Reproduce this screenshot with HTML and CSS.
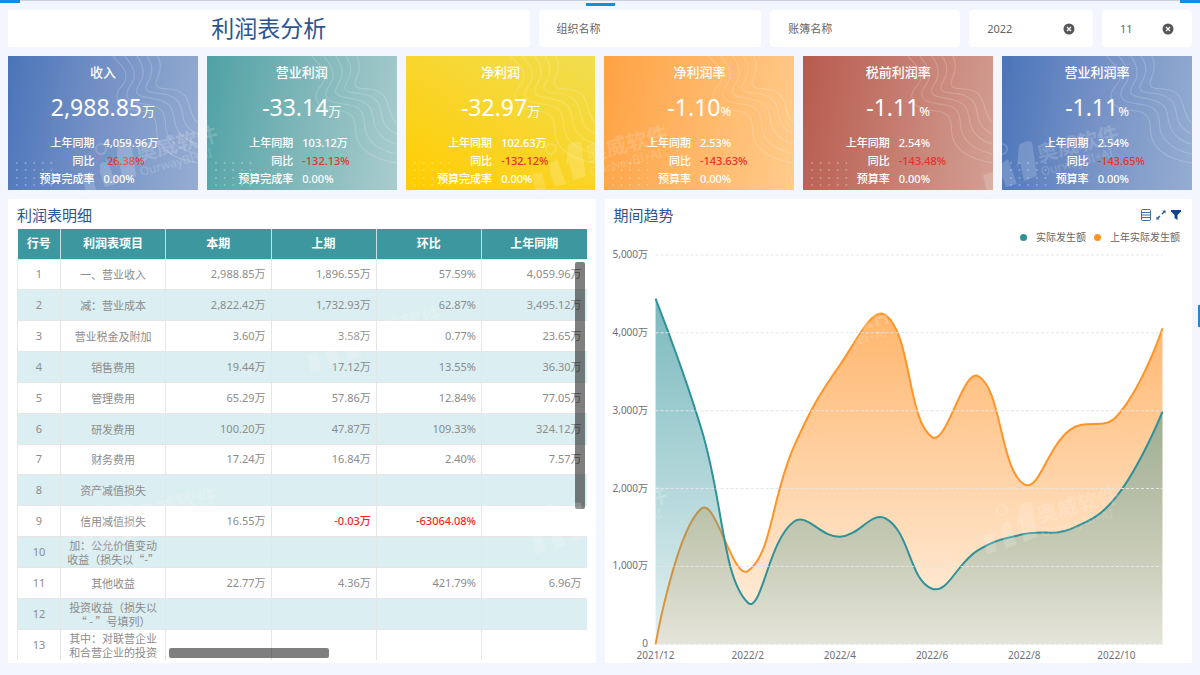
FILE: index.html
```html
<!DOCTYPE html>
<html lang="zh-CN">
<head>
    <meta charset="UTF-8">
    <meta name="viewport" content="width=device-width, initial-scale=1.0">
    <title>利润表分析</title>
    <link rel="stylesheet" href="styles.css">
</head>
<body>
    <!-- Shared shapes -->
    <svg class="defs" width="0" height="0" aria-hidden="true">
        <symbol id="card-art" viewBox="0 0 190 134">
            <g fill="none" stroke="#fff" stroke-opacity=".18" stroke-width="1.2">
                <path d="M105 0C111 8 119 12 118 22C117 30 109 32 109 40C109 52 122 54 134 55C150 57 148 68 149 78C151 94 168 104 190 107"/>
                <path d="M117 0C123 8 128 14 126 23C124 30 118 32 119 39C120 47 132 47 143 49C158 52 157 62 158 72C160 86 174 95 190 98"/>
                <path d="M129 0C135 8 137 15 134 23C132 29 127 32 129 37C131 42 142 41 151 44C166 48 165 57 167 66C169 78 180 86 190 88"/>
                <path d="M139 0C145 8 145 15 142 22C140 28 136 30 139 34C142 38 152 36 160 39C173 43 173 51 175 60C177 70 184 76 190 78"/>
                <path d="M150 0C154 8 153 14 150 21C148 26 147 28 150 31C154 34 162 32 168 34C180 38 180 46 183 55C185 61 187 65 190 67"/>
            </g>
            <g fill="none" stroke="#fff" stroke-opacity=".3" stroke-width="2" stroke-linecap="round" stroke-dasharray="0 8.6">
                <path d="M9 107H45"/>
                <path d="M9 114H45"/>
                <path d="M9 122H45"/>
                <path d="M9 129H45"/>
            </g>
        </symbol>
        <symbol id="icon-clear" viewBox="0 0 12 12">
            <circle cx="6" cy="6" r="5.5" fill="#54565c"/>
            <path d="M4 4L8 8M8 4L4 8" stroke="#fff" stroke-width="1.3"/>
        </symbol>
    </svg>

    <div class="top-line"><i></i><i></i><i></i></div>

    <main class="dashboard">
        <header class="header">
            <h1 class="title">利润表分析</h1>
            <div class="filter"><input type="text" placeholder="组织名称" aria-label="组织名称"></div>
            <div class="filter"><input type="text" placeholder="账簿名称" aria-label="账簿名称"></div>
            <div class="filter">
                <input type="text" value="2022" aria-label="年">
                <button type="button" aria-label="清除年"><svg><use href="#icon-clear"/></svg></button>
            </div>
            <div class="filter">
                <input type="text" value="11" aria-label="月">
                <button type="button" aria-label="清除月"><svg><use href="#icon-clear"/></svg></button>
            </div>
        </header>

        <section class="cards">
            <article class="card blue">
                <svg class="card-art"><use href="#card-art"/></svg>
                <h2>收入</h2>
                <p class="amount">2,988.85<small>万</small></p>
                <dl>
                    <dt>上年同期</dt><dd>4,059.96万</dd>
                    <dt>同比</dt><dd class="down">-26.38%</dd>
                    <dt>预算完成率</dt><dd>0.00%</dd>
                </dl>
            </article>
            <article class="card teal">
                <svg class="card-art"><use href="#card-art"/></svg>
                <h2>营业利润</h2>
                <p class="amount">-33.14<small>万</small></p>
                <dl>
                    <dt>上年同期</dt><dd>103.12万</dd>
                    <dt>同比</dt><dd class="down">-132.13%</dd>
                    <dt>预算完成率</dt><dd>0.00%</dd>
                </dl>
            </article>
            <article class="card yellow">
                <svg class="card-art"><use href="#card-art"/></svg>
                <h2>净利润</h2>
                <p class="amount">-32.97<small>万</small></p>
                <dl>
                    <dt>上年同期</dt><dd>102.63万</dd>
                    <dt>同比</dt><dd class="down">-132.12%</dd>
                    <dt>预算完成率</dt><dd>0.00%</dd>
                </dl>
            </article>
            <article class="card orange">
                <svg class="card-art"><use href="#card-art"/></svg>
                <h2>净利润率</h2>
                <p class="amount">-1.10<small>%</small></p>
                <dl>
                    <dt>上年同期</dt><dd>2.53%</dd>
                    <dt>同比</dt><dd class="down">-143.63%</dd>
                    <dt>预算率</dt><dd>0.00%</dd>
                </dl>
            </article>
            <article class="card red">
                <svg class="card-art"><use href="#card-art"/></svg>
                <h2>税前利润率</h2>
                <p class="amount">-1.11<small>%</small></p>
                <dl>
                    <dt>上年同期</dt><dd>2.54%</dd>
                    <dt>同比</dt><dd class="down">-143.48%</dd>
                    <dt>预算率</dt><dd>0.00%</dd>
                </dl>
            </article>
            <article class="card blue">
                <svg class="card-art"><use href="#card-art"/></svg>
                <h2>营业利润率</h2>
                <p class="amount">-1.11<small>%</small></p>
                <dl>
                    <dt>上年同期</dt><dd>2.54%</dd>
                    <dt>同比</dt><dd class="down">-143.65%</dd>
                    <dt>预算率</dt><dd>0.00%</dd>
                </dl>
            </article>
        </section>

        <div class="panels">
            <section class="panel">
                <div class="panel-head"><h2>利润表明细</h2></div>
                <div class="table-box">
                    <table>
                        <colgroup><col class="col-no"><col class="col-main"><col class="col-main"><col class="col-main"><col class="col-main"><col></colgroup>
                        <thead>
                            <tr><th>行号</th><th>利润表项目</th><th>本期</th><th>上期</th><th>环比</th><th>上年同期</th></tr>
                        </thead>
                        <tbody>
                            <tr><td>1</td><td>一、营业收入</td><td>2,988.85万</td><td>1,896.55万</td><td>57.59%</td><td>4,059.96万</td></tr>
                            <tr><td>2</td><td>减：营业成本</td><td>2,822.42万</td><td>1,732.93万</td><td>62.87%</td><td>3,495.12万</td></tr>
                            <tr><td>3</td><td>营业税金及附加</td><td>3.60万</td><td>3.58万</td><td>0.77%</td><td>23.65万</td></tr>
                            <tr><td>4</td><td>销售费用</td><td>19.44万</td><td>17.12万</td><td>13.55%</td><td>36.30万</td></tr>
                            <tr><td>5</td><td>管理费用</td><td>65.29万</td><td>57.86万</td><td>12.84%</td><td>77.05万</td></tr>
                            <tr><td>6</td><td>研发费用</td><td>100.20万</td><td>47.87万</td><td>109.33%</td><td>324.12万</td></tr>
                            <tr><td>7</td><td>财务费用</td><td>17.24万</td><td>16.84万</td><td>2.40%</td><td>7.57万</td></tr>
                            <tr><td>8</td><td>资产减值损失</td><td></td><td></td><td></td><td></td></tr>
                            <tr><td>9</td><td>信用减值损失</td><td>16.55万</td><td class="negative">-0.03万</td><td class="negative">-63064.08%</td><td></td></tr>
                            <tr><td>10</td><td>加：公允价值变动<br>收益（损失以“-”</td><td></td><td></td><td></td><td></td></tr>
                            <tr><td>11</td><td>其他收益</td><td>22.77万</td><td>4.36万</td><td>421.79%</td><td>6.96万</td></tr>
                            <tr><td>12</td><td>投资收益（损失以<br>“ - ”号填列）</td><td></td><td></td><td></td><td></td></tr>
                            <tr><td>13</td><td>其中：对联营企业<br>和合营企业的投资</td><td></td><td></td><td></td><td></td></tr>
                        </tbody>
                    </table>
                    <div class="scroll-y"></div>
                    <div class="scroll-x"></div>
                </div>
            </section>

            <section class="panel">
                <div class="panel-head">
                    <h2>期间趋势</h2>
                    <div class="tools">
                        <button type="button" aria-label="数据">
                            <svg viewBox="0 0 12 12" fill="none" stroke="#3a6ea8"><rect x="1.5" y=".5" width="9" height="11" rx="1"/><path d="M2 3.500H10M2 6H10M2 8.500H10"/></svg>
                        </button>
                        <button type="button" aria-label="放大">
                            <svg viewBox="0 0 12 12" stroke="#1f5597" fill="#1f5597"><path d="M2.500 9.500L5 7M7 5L9.500 2.500" stroke-width="1.4"/><path d="M1.500 7.500V10.500H4.500ZM7.500 1.500H10.500V4.500Z" stroke="none"/></svg>
                        </button>
                        <button type="button" aria-label="筛选">
                            <svg viewBox="0 0 12 12" fill="#0f4590"><path d="M1 1H11V2.500L7.500 6V11L4.500 9V6L1 2.500Z"/></svg>
                        </button>
                    </div>
                </div>
                <ul class="legend">
                    <li class="current">实际发生额</li>
                    <li class="previous">上年实际发生额</li>
                </ul>
                <svg class="chart" id="chart" viewBox="0 0 587 418" role="img" aria-label="期间趋势">
                    <defs>
                        <linearGradient id="fill-current" x1="0" y1="0" x2="0" y2="1">
                            <stop offset="0" stop-color="#2f9299" stop-opacity=".64"/>
                            <stop offset="1" stop-color="#2f9299" stop-opacity=".13"/>
                        </linearGradient>
                        <linearGradient id="fill-previous" x1="0" y1="0" x2="0" y2="1">
                            <stop offset="0" stop-color="#ff9429" stop-opacity=".68"/>
                            <stop offset="1" stop-color="#ff9429" stop-opacity=".13"/>
                        </linearGradient>
                    </defs>
                </svg>
            </section>
        </div>
    </main>

    <div class="side-handle"></div>

    <svg class="watermarks" id="watermarks" aria-hidden="true"></svg>

    <script src="script.js"></script>
</body>
</html>
```
FILE: styles.css
```css
* {
    margin: 0;
    padding: 0;
    box-sizing: border-box;
}

body {
    min-height: 100vh;
    background: #f3f6fe;
    font-family: "Noto Sans", "Noto Sans CJK SC", sans-serif;
    font-size: 11px;
    color: #666;
}

button {
    border: none;
    background: none;
    cursor: pointer;
}

.defs {
    position: absolute;
}

/* Top edge */
.top-line {
    position: absolute;
    top: 0;
    left: 0;
    right: 0;
    display: flex;
    justify-content: space-between;
    border-top: 1px solid #ccd0de;
}

.top-line i {
    width: 20px;
    height: 3px;
    margin-top: -1px;
    background: #0f8fe0;
}

.top-line i:nth-child(2) {
    width: 29px;
    margin-top: 2px;
}

.side-handle {
    position: absolute;
    top: 305px;
    right: 0;
    width: 2px;
    height: 22px;
    background: #2288dd;
}

.dashboard {
    display: flex;
    flex-direction: column;
    gap: 9px;
    min-height: 100vh;
    padding: 10px 8px 12px;
}

/* Header */
.header {
    display: grid;
    grid-template-columns: 522fr 223fr 190fr 124fr 90fr;
    gap: 9px;
}

.title {
    background: #fff;
    font-size: 23px;
    line-height: 37px;
    font-weight: 400;
    text-align: center;
    color: #2b5590;
}

.filter {
    display: flex;
    align-items: center;
    height: 37px;
    padding: 0 18px;
    background: #fff;
    border-radius: 4px;
}

.filter input {
    flex: 1;
    width: 100%;
    min-width: 0;
    border: none;
    outline: none;
    background: none;
    font: inherit;
    color: #666;
}

.filter input::placeholder {
    color: #666;
    opacity: 1;
}

.filter button,
.filter svg {
    display: block;
    width: 12px;
    height: 12px;
}

/* Cards */
.cards {
    display: grid;
    grid-template-columns: repeat(6, 1fr);
    gap: 9px;
}

.card {
    position: relative;
    padding: 6px 0 2px;
    color: #fff;
    text-align: center;
}

.card-art {
    position: absolute;
    top: 0;
    left: 0;
    width: 100%;
    height: 100%;
}

.card h2 {
    font-size: 13px;
    line-height: 20px;
    font-weight: 500;
}

.amount {
    font-size: 23px;
    line-height: 32px;
    margin: 9px 0 11px;
}

.amount small {
    font-size: 13px;
    line-height: 1;
}

.card dl {
    display: grid;
    grid-template-columns: 11fr 12fr;
    column-gap: 9px;
    line-height: 18px;
    font-weight: 500;
}

.card dt {
    text-align: right;
}

.card dd {
    text-align: left;
}

.card .down {
    color: #e5322d;
}

.blue {
    background: linear-gradient(100deg, #4a74b9, #7390c5 45%, #96add2);
}

.teal {
    background: linear-gradient(100deg, #4fa1a5, #7fb7b9 50%, #aaccce);
}

.yellow {
    background: linear-gradient(30deg, #ffcd00, #f9d52a 50%, #f0de50);
}

.orange {
    background: linear-gradient(100deg, #ffa243, #ffb768 50%, #ffcc8c);
}

.red {
    background: linear-gradient(100deg, #b75b4e, #c57d70 50%, #d3a095);
}

/* Panels */
.panels {
    flex: 1;
    display: grid;
    grid-template-columns: 1fr 1fr;
    gap: 9px;
}

.panel {
    display: flex;
    flex-direction: column;
    background: #fff;
}

.panel-head {
    display: flex;
    justify-content: space-between;
    align-items: center;
    height: 30px;
    padding: 2px 9px 0;
}

.panel-head h2 {
    font-size: 15px;
    line-height: 20px;
    font-weight: 400;
    color: #2b5590;
}

.tools {
    display: flex;
    gap: 3px;
    padding-right: 1px;
}

.tools button,
.tools svg {
    display: block;
    width: 12px;
    height: 12px;
}

/* Table */
.table-box {
    position: relative;
    margin: 0 9px;
}

table {
    width: 100%;
    height: 431px;
    table-layout: fixed;
    border-collapse: collapse;
    line-height: 14px;
    color: #8c8c8c;
}

.col-no {
    width: 43px;
}

.col-main {
    width: 18.5%;
}

th {
    height: 30px;
    background: #3d979e;
    border-right: 1px solid #c5e0e2;
    font-size: 12px;
    color: #fff;
}

th:last-child {
    border-right: none;
}

td {
    height: 30px;
    padding: 0 5px;
    border: 1px solid #e6e6e6;
    text-align: right;
}

td:nth-child(-n+2) {
    padding: 0;
    text-align: center;
}

td:nth-child(2) {
    font-family: "Noto Sans CJK SC", sans-serif;
}

td:last-child {
    border-right: none;
}

tbody tr:last-child td {
    border-bottom: none;
}

tbody tr:nth-child(even) {
    background: #dbeef1;
}

td.negative {
    color: #ff1f1f;
    font-weight: 500;
}

.scroll-y,
.scroll-x {
    position: absolute;
    background: rgba(0, 0, 0, .5);
    border-radius: 2px;
}

.scroll-y {
    top: 33px;
    right: 2px;
    width: 10px;
    height: 247px;
}

.scroll-x {
    left: 152px;
    bottom: 2px;
    width: 160px;
    height: 10px;
}

/* Chart */
.legend {
    display: flex;
    justify-content: flex-end;
    gap: 8px;
    padding-right: 12px;
    list-style: none;
    font-size: 10px;
    line-height: 16px;
}

.legend li {
    display: flex;
    align-items: center;
    gap: 9px;
}

.legend li::before {
    content: "";
    width: 7px;
    height: 7px;
    border-radius: 50%;
}

.legend .current::before {
    background: #2f9299;
}

.legend .previous::before {
    background: #ff9429;
}

.chart {
    display: block;
    width: 100%;
}

.chart text {
    font-size: 10px;
    fill: #6e7079;
}

.grid-line {
    stroke: #e3e5ea;
    stroke-dasharray: 3 2;
}

.line {
    fill: none;
    stroke-width: 2;
}

/* Watermark */
.watermarks {
    position: absolute;
    top: 0;
    left: 0;
    width: 100%;
    height: 100%;
    fill: #fff;
    opacity: .17;
    pointer-events: none;
}

.mark-name {
    font-size: 21px;
    font-weight: 700;
}

.mark-sub {
    font-size: 12px;
}
```
FILE: script.js
```javascript
const chart = document.getElementById("chart");
const plot = { left: 50.5, right: 557, top: 10, bottom: 399 };
const maxValue = 5000;

const previous = [0, 1746, 941, 2537, 3587, 4225, 2662, 3445, 2055, 2758, 2923, 4059.96];
const current = [4440, 2755, 537, 1575, 1382, 1615, 714, 1211, 1416, 1480, 1896.55, 2988.85];
const months = ["2021/12", "2022/2", "2022/4", "2022/6", "2022/8", "2022/10"];

function add(tag, attrs, text) {
    const el = document.createElementNS("http://www.w3.org/2000/svg", tag);
    for (const key in attrs) {
        el.setAttribute(key, attrs[key]);
    }
    if (text) el.textContent = text;
    chart.appendChild(el);
}

function xOf(i) {
    return plot.left + i * (plot.right - plot.left) / 11;
}

function yOf(value) {
    return plot.bottom - value * (plot.bottom - plot.top) / maxValue;
}

// Smooth curve through all points, handles follow the line between neighbours
function curve(values) {
    const pts = values.map((v, i) => [xOf(i), yOf(v)]);
    let d = "M" + pts[0];
    let out = pts[0];
    for (let i = 1; i < pts.length; i++) {
        const prev = pts[i - 1];
        const p = pts[i];
        const next = pts[i + 1];
        let into = p;
        let nextOut = p;
        if (next) {
            const lenPrev = Math.hypot(p[0] - prev[0], p[1] - prev[1]);
            const lenNext = Math.hypot(next[0] - p[0], next[1] - p[1]);
            const ratio = lenNext / (lenNext + lenPrev);
            const vx = (next[0] - prev[0]) * 0.42;
            const vy = (next[1] - prev[1]) * 0.42;
            into = [p[0] - vx * (1 - ratio), p[1] - vy * (1 - ratio)];
            nextOut = [p[0] + vx * ratio, p[1] + vy * ratio];
        }
        d += "C" + out + " " + into + " " + p;
        out = nextOut;
    }
    return d;
}

function drawSeries(values, color, fill) {
    const d = curve(values);
    add("path", { d: d + "V" + plot.bottom + "H" + plot.left + "Z", fill: "url(#" + fill + ")" });
    add("path", { d: d, class: "line", stroke: color });
}

drawSeries(previous, "#ff9429", "fill-previous");
drawSeries(current, "#2f9299", "fill-current");

for (let value = 0; value <= maxValue; value += 1000) {
    const y = yOf(value);
    add("line", { x1: plot.left, x2: plot.right, y1: y, y2: y, class: "grid-line" });
    add("text", { x: 43, y: y + 3, "text-anchor": "end" }, value ? value.toLocaleString("en-US") + "万" : "0");
}

months.forEach((month, i) => {
    add("text", { x: xOf(i * 2), y: 414, "text-anchor": "middle" }, month);
});

// Watermark, repeated over the page in staggered rows
const marks = [[82, 121], [532, 121], [983, 121], [307, 301], [757, 301], [82, 482], [532, 482], [983, 482]];

document.getElementById("watermarks").innerHTML = marks.map(([x, y]) => `
    <g transform="translate(${x} ${y})">
        <circle cx="19" cy="28" r="5" fill="none" stroke="#fff" stroke-width="2"/>
        <path d="M0 54L10 51L14 69L4 72Z"/>
        <path d="M18 43L25 38L34 63L23 66L18 52Z"/>
        <path d="M36 24Q42 19 49 21L54 55L41 60L37 40L34 46Z"/>
        <text class="mark-name" transform="translate(56 41) rotate(-15)">奥威软件</text>
        <text class="mark-sub" transform="translate(59 55) rotate(-15)">OurwayBI+AI</text>
    </g>`).join("");
```
